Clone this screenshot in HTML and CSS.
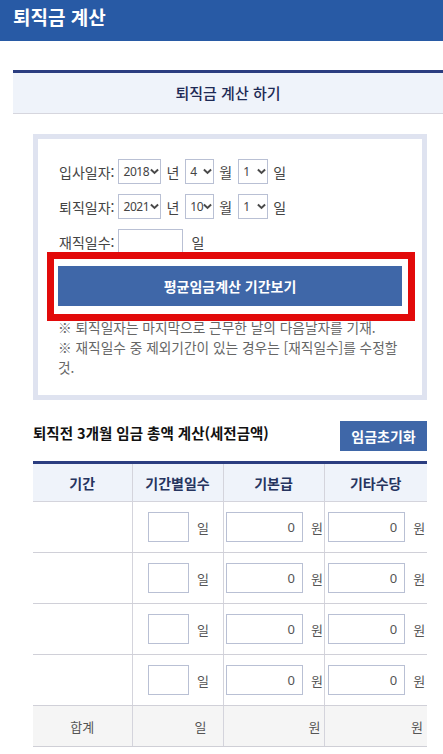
FILE: index.html
```html
<!DOCTYPE html>
<html lang="ko">
<head>
<meta charset="utf-8">
<title>퇴직금 계산</title>
<link rel="stylesheet" href="styles.css">
</head>
<body>
<header class="topbar"><h1 class="topbar-title">퇴직금 계산</h1></header>
<main class="page">
  <div class="title-bar">퇴직금 계산 하기</div>
  <div class="content">
    <section class="form-box">
      <div class="form-row">
        <span class="label">입사일자:</span>
        <span class="sel sel-year"><select><option>2018</option></select><svg class="chev" viewBox="0 0 10 7" width="9" height="7"><path d="M1 1.2 L5 5 L9 1.2" fill="none" stroke="#4a4a4a" stroke-width="2.2"/></svg></span>
        <span class="unit">년</span>
        <span class="sel sel-small"><select><option>4</option></select><svg class="chev" viewBox="0 0 10 7" width="9" height="7"><path d="M1 1.2 L5 5 L9 1.2" fill="none" stroke="#4a4a4a" stroke-width="2.2"/></svg></span>
        <span class="unit">월</span>
        <span class="sel sel-small sel-day"><select><option>1</option></select><svg class="chev" viewBox="0 0 10 7" width="9" height="7"><path d="M1 1.2 L5 5 L9 1.2" fill="none" stroke="#4a4a4a" stroke-width="2.2"/></svg></span>
        <span class="unit">일</span>
      </div>
      <div class="form-row">
        <span class="label">퇴직일자:</span>
        <span class="sel sel-year"><select><option>2021</option></select><svg class="chev" viewBox="0 0 10 7" width="9" height="7"><path d="M1 1.2 L5 5 L9 1.2" fill="none" stroke="#4a4a4a" stroke-width="2.2"/></svg></span>
        <span class="unit">년</span>
        <span class="sel sel-small"><select><option>10</option></select><svg class="chev" viewBox="0 0 10 7" width="9" height="7"><path d="M1 1.2 L5 5 L9 1.2" fill="none" stroke="#4a4a4a" stroke-width="2.2"/></svg></span>
        <span class="unit">월</span>
        <span class="sel sel-small sel-day"><select><option>1</option></select><svg class="chev" viewBox="0 0 10 7" width="9" height="7"><path d="M1 1.2 L5 5 L9 1.2" fill="none" stroke="#4a4a4a" stroke-width="2.2"/></svg></span>
        <span class="unit">일</span>
      </div>
      <div class="form-row form-row-last">
        <span class="label">재직일수:</span>
        <input class="days-input" type="text">
        <span class="unit unit-days">일</span>
      </div>
      <div class="btn-wrap">
        <button class="btn-main" type="button">평균임금계산 기간보기</button>
        <div class="highlight"></div>
      </div>
      <p class="note">※ 퇴직일자는 마지막으로 근무한 날의 다음날자를 기재.<br>※ 재직일수 중 제외기간이 있는 경우는 [재직일수]를 수정할 것.</p>
    </section>

    <div class="section-head">
      <h2 class="section-title">퇴직전 3개월 임금 총액 계산(세전금액)</h2>
      <button class="btn-reset" type="button">임금초기화</button>
    </div>

    <table class="wage-table">
      <colgroup><col class="c1"><col class="c2"><col class="c3"><col class="c4"></colgroup>
      <thead>
        <tr><th>기간</th><th>기간별일수</th><th>기본급</th><th>기타수당</th></tr>
      </thead>
      <tbody>
        <tr><td></td><td><input class="in-day" type="text"><span class="u">일</span></td><td><input class="in-won" type="text" value="0"><span class="u">원</span></td><td><input class="in-won" type="text" value="0"><span class="u">원</span></td></tr>
        <tr><td></td><td><input class="in-day" type="text"><span class="u">일</span></td><td><input class="in-won" type="text" value="0"><span class="u">원</span></td><td><input class="in-won" type="text" value="0"><span class="u">원</span></td></tr>
        <tr><td></td><td><input class="in-day" type="text"><span class="u">일</span></td><td><input class="in-won" type="text" value="0"><span class="u">원</span></td><td><input class="in-won" type="text" value="0"><span class="u">원</span></td></tr>
        <tr><td></td><td><input class="in-day" type="text"><span class="u">일</span></td><td><input class="in-won" type="text" value="0"><span class="u">원</span></td><td><input class="in-won" type="text" value="0"><span class="u">원</span></td></tr>
      </tbody>
      <tfoot>
        <tr><td class="f1">합계</td><td class="f2">일</td><td class="f3">원</td><td class="f4">원</td></tr>
      </tfoot>
    </table>
  </div>
</main>
</body>
</html>
```
FILE: styles.css
```css
* { box-sizing: border-box; }
html, body { margin: 0; padding: 0; }
body {
  font-family: "Noto Sans CJK KR", "Noto Sans", sans-serif;
  color: #444;
  background: #fff;
  overflow: hidden;
}
.topbar {
  height: 41px;
  background: #285aa5;
  padding: 0 13px;
}
.topbar-title {
  margin: 0;
  color: #fff;
  font-size: 19px;
  font-weight: 700;
  line-height: 34px;
}
.page {
  padding: 29px 0 0 13px;
}
.title-bar {
  border-top: 3px solid #2b3d80;
  border-bottom: 1px solid #d6d6de;
  background: #eff3fa;
  height: 44px;
  line-height: 40px;
  text-align: center;
  font-size: 15px;
  font-weight: 500;
  color: #1e2a55;
}
.content {
  padding: 20px 16px 0 20px;
}
.form-box {
  border: 5px solid #dfe3f0;
  padding: 20px 20px 18px 20px;
}
.form-row {
  display: flex;
  align-items: center;
  height: 25px;
  margin-bottom: 10px;
  font-size: 14px;
  color: #444;
}
.form-row-last { margin-bottom: 12px; }
.label { margin-right: 4px; margin-left: 1px; }
.unit { margin: 0 6px 0 5px; }
.unit-days { margin-left: 8px; }
.sel {
  position: relative;
  display: inline-block;
  height: 25px;
}
.sel select {
  appearance: none;
  -webkit-appearance: none;
  height: 25px;
  border: 1px solid #b9c0d4;
  background: #fff;
  font-family: "Noto Sans", sans-serif;
  font-size: 12px;
  letter-spacing: -0.4px;
  color: #444;
  padding: 0 0 0 4px;
  margin: 0;
  border-radius: 0;
  outline: none;
}
.sel-year select { width: 43px; }
.sel-small select { width: 29px; }
.sel-day select { width: 30px; }
.sel .chev {
  position: absolute;
  right: 2px;
  top: 9px;
  pointer-events: none;
}
.days-input {
  width: 65px;
  height: 25px;
  border: 1px solid #b9c0d4;
  margin: 0;
  padding: 0;
}
.btn-wrap {
  position: relative;
}
.btn-main {
  display: block;
  width: 100%;
  height: 40px;
  border: 0;
  background: #3f67a8;
  color: #fff;
  font-family: "Noto Sans CJK KR", sans-serif;
  font-size: 14px;
  font-weight: 700;
  padding: 0;
}
.highlight {
  position: absolute;
  left: -11px;
  right: -13px;
  top: -14px;
  bottom: -15px;
  border: 7px solid #e20a0a;
  pointer-events: none;
}
.note {
  margin: 11px 0 0 0;
  font-size: 13.7px;
  line-height: 20px;
  color: #666;
}
.section-head {
  display: flex;
  justify-content: space-between;
  align-items: flex-start;
  margin-top: 21px;
}
.section-title {
  margin: 2px 0 0 0;
  font-size: 14.5px;
  font-weight: 700;
  color: #111;
  line-height: 20px;
}
.btn-reset {
  width: 87px;
  height: 30px;
  border: 0;
  background: #3f67a8;
  color: #fff;
  font-family: "Noto Sans CJK KR", sans-serif;
  font-size: 14px;
  font-weight: 700;
  padding: 0;
}
.wage-table {
  margin-top: 10px;
  width: 394px;
  border-collapse: collapse;
  table-layout: fixed;
  border-top: 3px solid #2b3d80;
}
.c1 { width: 99px; }
.c2 { width: 91px; }
.c3 { width: 101px; }
.c4 { width: 103px; }
.wage-table th {
  height: 39px;
  background: #eff3fa;
  color: #26345f;
  font-size: 14px;
  font-weight: 700;
  padding: 0;
  border-left: 1px solid #d4d4dc;
  border-bottom: 1px solid #d4d4dc;
}
.wage-table th:first-child, .wage-table td:first-child { border-left: 0; }
.wage-table td {
  height: 51px;
  padding: 0;
  text-align: center;
  border-left: 1px solid #d4d4dc;
  border-bottom: 1px solid #d0d0d8;
  font-size: 13px;
  color: #555;
  white-space: nowrap;
}
.wage-table input {
  height: 30px;
  border: 1px solid #b9c0d4;
  margin: 0 8px 0 0;
  padding: 0 7px 0 0;
  vertical-align: middle;
  font-family: "Noto Sans", sans-serif;
  font-size: 13px;
  color: #555;
  text-align: right;
}
.in-day { width: 41px; }
.in-won { width: 77px; }
.u { display: inline-block; width: 10px; text-align: left; vertical-align: middle; }
.wage-table tfoot td {
  height: 41px;
  background: #f5f5f5;
  border-top: 1px solid #2b3d80;
  border-bottom: 1px solid #cfcfd6;
}
.wage-table tfoot .f1 { text-align: center; }
.wage-table tfoot .f2 { text-align: right; padding-right: 16px; }
.wage-table tfoot .f3 { text-align: right; padding-right: 3px; }
.wage-table tfoot .f4 { text-align: right; padding-right: 4px; }
```
